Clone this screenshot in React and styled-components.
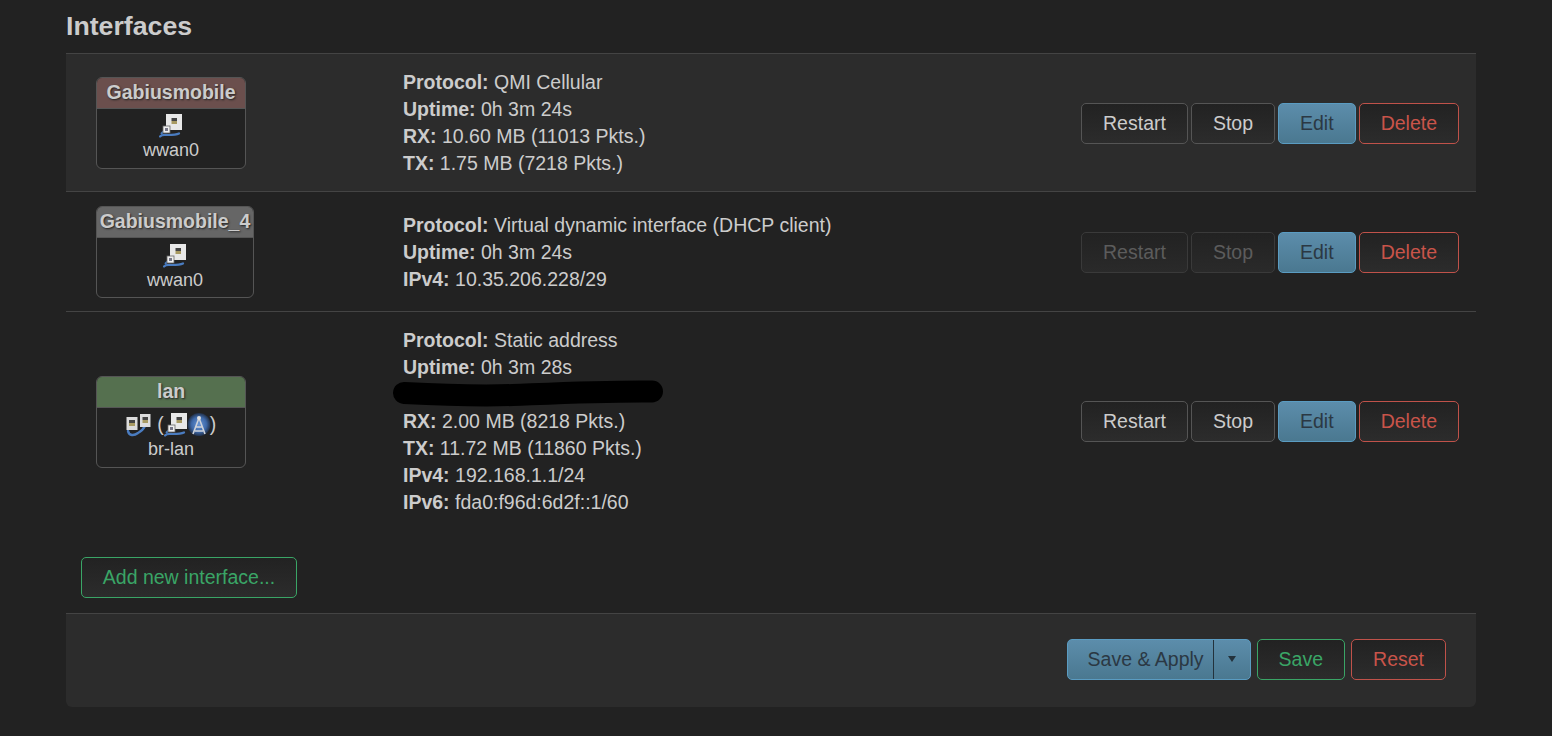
import styled, { createGlobalStyle, css } from 'styled-components';

const GlobalStyle = createGlobalStyle`
  html, body { margin: 0; padding: 0; background: #222; }
  body {
    min-height: 100vh;
    color: #ccc;
    font-family: "Liberation Sans", Arial, sans-serif;
    font-size: 19.5px;
    line-height: 27px;
  }
`;

const Page = styled.div`
  width: 1410px;
  margin-left: 66px;
`;

const Title = styled.h2`
  margin: 0;
  height: 53px;
  font-size: 26.7px;
  line-height: 52px;
  font-weight: bold;
  color: #ccc;
`;

const Row = styled.div`
  display: grid;
  grid-template-columns: 337px 1fr auto;
  align-items: center;
  padding: 14.5px 17px 14px 0;
  border-top: 1px solid #444;
  background: ${(p) => (p.$light ? '#2c2c2c' : '#222')};
`;

const NameCell = styled.div`
  display: flex;
  padding-left: 30.4px;
`;

const Badge = styled.div`
  box-sizing: border-box;
  min-width: 149.4px;
  margin-bottom: -0.6px;
  border: 1px solid #555;
  border-radius: 6px;
  overflow: hidden;
  background: #222;
  text-align: center;
`;

const BadgeHead = styled.div`
  height: 30px;
  padding: 0 2.25px;
  border-bottom: 1px solid #555;
  background: ${(p) => p.$color};
  font-weight: bold;
  line-height: 29px;
  color: #ccc;
  text-shadow: 1px 1px 2px #222;
  white-space: nowrap;
`;

const BadgeBody = styled.div`
  padding: 4.6px 0 4.4px;
  font-size: 18px;
  line-height: 25px;
`;

const IconRow = styled.div`
  display: flex;
  align-items: center;
  justify-content: center;
  height: 25px;
  font-size: 19.5px;
`;

const WifiSlot = styled.span`
  display: flex;
  margin-left: -1px;
  margin-right: -1px;
`;

const Info = styled.div`
  padding-top: 0.5px;
  margin-bottom: -0.5px;
  white-space: nowrap;
`;

const Line = styled.div`
  height: 27px;
  b { font-weight: bold; }
`;

const RedactedLine = styled(Line)`
  position: relative;
`;

const Scribble = styled.svg`
  position: absolute;
  left: -10px;
  top: -1px;
`;

const Actions = styled.div`
  display: flex;
  gap: 3px;
  margin-top: 1px;
`;

const variants = {
  plain: css`
    color: #ccc;
    border-color: #555;
    background: linear-gradient(#222, #2c2c2c);
  `,
  disabled: css`
    color: #5c5c5c;
    border-color: #3a3a3a;
    background: linear-gradient(#222, #2a2a2a);
  `,
  edit: css`
    color: #2b3843;
    border-color: #5a9cc2;
    background: linear-gradient(#5c8dab, #4a7890);
  `,
  red: css`
    color: #c9544a;
    border-color: #c0524a;
    background: linear-gradient(#222, #2c2c2c);
  `,
  green: css`
    color: #3aa566;
    border-color: #3aa566;
    background: linear-gradient(#222, #2c2c2c);
  `,
};

const Button = styled.button`
  box-sizing: border-box;
  height: 41px;
  padding: 0 21px 1px;
  border: 1px solid;
  border-radius: 5px;
  font: inherit;
  line-height: 36px;
  white-space: nowrap;
  ${(p) => variants[p.$kind || 'plain']}
`;

const AddRow = styled.div`
  padding: 27.1px 0 15px 15px;
`;

const AddButton = styled(Button)`
  width: 216px;
  padding: 0 0 1px;
`;

const Footer = styled.div`
  display: flex;
  justify-content: flex-end;
  gap: 6px;
  padding: 25px 30px 27px 0;
  border-top: 1px solid #444;
  border-radius: 0 0 6px 6px;
  background: #2c2c2c;
`;

const SplitButton = styled.div`
  display: flex;
  box-sizing: border-box;
  height: 41px;
  border: 1px solid #5a9cc2;
  border-radius: 5px;
  background: linear-gradient(#5c8dab, #4a7890);
  color: #2b3843;
  line-height: 38px;
`;

const SplitLabel = styled.div`
  padding: 0 9px 0 20px;
  border-right: 1px solid #23323c;
`;

const SplitCaret = styled.div`
  display: flex;
  align-items: center;
  justify-content: center;
  width: 36px;
`;

const Caret = styled.i`
  width: 0;
  height: 0;
  margin: 0 0 1px 1px;
  border-left: 4px solid transparent;
  border-right: 4px solid transparent;
  border-top: 6px solid #23323c;
`;

const PortIcon = () => (
  <svg width="24" height="25" viewBox="0 0 24 25">
    <path d="M1 23.500c2-2.500 5-1.500 8-1.500 3.500 0 8 0 11-1.500" fill="none" stroke="#4a7cc0" strokeWidth="2.200" strokeLinecap="round" />
    <path d="M2 21l3-3" stroke="#4a7cc0" strokeWidth="2" />
    <rect x="7" y="1" width="16" height="16" fill="#e8e8e8" />
    <rect x="12.500" y="5" width="5.500" height="3" fill="#444" />
    <rect x="12.500" y="8" width="5.500" height="3" fill="#a89a62" />
    <rect x="4" y="13" width="7" height="7" fill="#eee" stroke="#666" strokeWidth=".8" />
    <rect x="6" y="15" width="3" height="3" fill="#778" />
  </svg>
);

const DualPortIcon = () => (
  <svg width="26" height="25" viewBox="0 0 26 25">
    <path d="M2 19c1 5 6 5 10 2 3-1.500 5-3 7-7" fill="none" stroke="#4a7cc0" strokeWidth="2.400" strokeLinecap="round" />
    <rect x="0.500" y="5" width="11" height="13" fill="#dcdcdc" />
    <rect x="3" y="8" width="6" height="3" fill="#444" />
    <rect x="3" y="11" width="6" height="3" fill="#a89a62" />
    <rect x="14" y="2" width="10.500" height="13" fill="#dcdcdc" />
    <rect x="16.500" y="5" width="5.500" height="3" fill="#444" />
    <rect x="16.500" y="8" width="5.500" height="3" fill="#a89a62" />
  </svg>
);

const WifiIcon = () => (
  <svg width="24" height="25" viewBox="0 0 24 25">
    <defs>
      <radialGradient id="wifiGlow">
        <stop offset="0%" stopColor="#6b98d8" />
        <stop offset="65%" stopColor="#3d68a8" />
        <stop offset="100%" stopColor="#223048" />
      </radialGradient>
    </defs>
    <circle cx="12" cy="12.500" r="11.500" fill="url(#wifiGlow)" />
    <path d="M12 6L6 22M12 6l6 16M9 15h6M8 19h8" fill="none" stroke="#cfd3da" strokeWidth="1.600" />
    <circle cx="12" cy="6" r="2" fill="#e0e0e0" />
  </svg>
);

const rows = [
  {
    name: 'Gabiusmobile',
    color: '#6b4f4d',
    device: 'wwan0',
    light: true,
    lines: [
      ['Protocol:', 'QMI Cellular'],
      ['Uptime:', '0h 3m 24s'],
      ['RX:', '10.60 MB (11013 Pkts.)'],
      ['TX:', '1.75 MB (7218 Pkts.)'],
    ],
  },
  {
    name: 'Gabiusmobile_4',
    color: '#666',
    device: 'wwan0',
    disabled: true,
    lines: [
      ['Protocol:', 'Virtual dynamic interface (DHCP client)'],
      ['Uptime:', '0h 3m 24s'],
      ['IPv4:', '10.35.206.228/29'],
    ],
  },
  {
    name: 'lan',
    color: '#55704f',
    device: 'br-lan',
    bridge: true,
    lines: [
      ['Protocol:', 'Static address'],
      ['Uptime:', '0h 3m 28s'],
      null,
      ['RX:', '2.00 MB (8218 Pkts.)'],
      ['TX:', '11.72 MB (11860 Pkts.)'],
      ['IPv4:', '192.168.1.1/24'],
      ['IPv6:', 'fda0:f96d:6d2f::1/60'],
    ],
  },
];

function App() {
  return (
    <>
      <GlobalStyle />
      <Page>
        <Title>Interfaces</Title>
        {rows.map((row) => (
          <Row key={row.name} $light={row.light}>
            <NameCell>
              <Badge>
                <BadgeHead $color={row.color}>{row.name}</BadgeHead>
                <BadgeBody>
                  {row.bridge ? (
                    <IconRow>
                      <DualPortIcon />
                      <span>&nbsp;(</span>
                      <PortIcon />
                      <WifiSlot>
                        <WifiIcon />
                      </WifiSlot>
                      <span>)</span>
                    </IconRow>
                  ) : (
                    <IconRow>
                      <PortIcon />
                    </IconRow>
                  )}
                  {row.device}
                </BadgeBody>
              </Badge>
            </NameCell>
            <Info>
              {row.lines.map((line, i) =>
                line ? (
                  <Line key={i}>
                    <b>{line[0]}</b> {line[1]}
                  </Line>
                ) : (
                  <RedactedLine key={i}>
                    <Scribble width="272" height="30" viewBox="0 0 272 30">
                      <path
                        d="M11 13C50 15 90 16 120 15C170 13 210 11 259 11.500"
                        fill="none"
                        stroke="#000"
                        strokeWidth="22"
                        strokeLinecap="round"
                      />
                    </Scribble>
                  </RedactedLine>
                )
              )}
            </Info>
            <Actions>
              <Button $kind={row.disabled ? 'disabled' : 'plain'}>Restart</Button>
              <Button $kind={row.disabled ? 'disabled' : 'plain'}>Stop</Button>
              <Button $kind="edit">Edit</Button>
              <Button $kind="red">Delete</Button>
            </Actions>
          </Row>
        ))}
        <AddRow>
          <AddButton $kind="green">Add new interface...</AddButton>
        </AddRow>
        <Footer>
          <SplitButton>
            <SplitLabel>Save &amp; Apply</SplitLabel>
            <SplitCaret>
              <Caret />
            </SplitCaret>
          </SplitButton>
          <Button $kind="green">Save</Button>
          <Button $kind="red">Reset</Button>
        </Footer>
      </Page>
    </>
  );
}

export default App;
